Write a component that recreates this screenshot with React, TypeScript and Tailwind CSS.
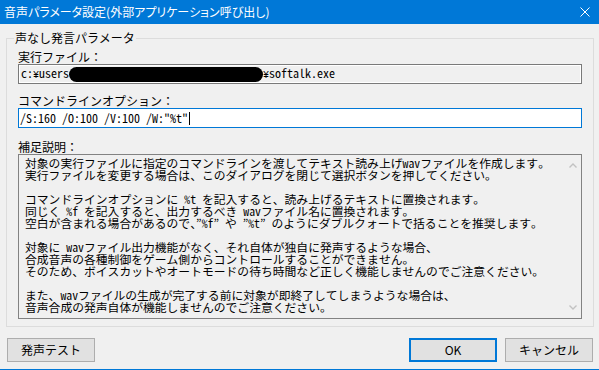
import React from "react";

const ui = "font-['Noto_Sans_CJK_JP',sans-serif]";
const mono = "font-['Noto_Sans_Mono_CJK_JP','Liberation_Mono',monospace]";

const notes: string[] = [
  "対象の実行ファイルに指定のコマンドラインを渡してテキスト読み上げwavファイルを作成します。",
  "実行ファイルを変更する場合は、このダイアログを閉じて選択ボタンを押してください。",
  "",
  "コマンドラインオプションに %t を記入すると、読み上げるテキストに置換されます。",
  "同じく %f を記入すると、出力するべき wavファイル名に置換されます。",
  "空白が含まれる場合があるので、”%f” や ”%t” のようにダブルクォートで括ることを推奨します。",
  "",
  "対象に wavファイル出力機能がなく、それ自体が独自に発声するような場合、",
  "合成音声の各種制御をゲーム側からコントロールすることができません。",
  "そのため、ボイスカットやオートモードの待ち時間など正しく機能しませんのでご注意ください。",
  "",
  "また、wavファイルの生成が完了する前に対象が即終了してしまうような場合は、",
  "音声合成の発声自体が機能しませんのでご注意ください。",
];

// half-width yen sign, 6px wide like MS Gothic
function Yen() {
  return <span className="font-['Liberation_Mono',monospace] text-[10px]">¥</span>;
}

function Button({ label, primary }: { label: string; primary?: boolean }) {
  return (
    <button
      className={`w-[88px] h-[24px] bg-[#e1e1e1] text-[12px] leading-none text-black ${ui} ${
        primary ? "border-2 border-[#0078d7]" : "border border-[#adadad]"
      }`}
    >
      {label}
    </button>
  );
}

export default function App() {
  return (
    <div className="w-[599px] h-[370px] bg-[#f0f0f0] flex flex-col border-b border-[#0078d7] overflow-hidden">
      {/* title bar */}
      <div className="h-[24px] shrink-0 bg-[#0078d7] flex items-center justify-between pl-[4px] pr-[9px]">
        <span className={`text-white text-[12px] leading-none [font-feature-settings:'palt'] ${ui}`}>
          音声パラメータ設定(外部アプリケーション呼び出し)
        </span>
        <svg width="10" height="10" viewBox="0 0 10 10" className="text-white">
          <path d="M0.5 0.5 L9.5 9.5 M9.5 0.5 L0.5 9.5" stroke="currentColor" strokeWidth="1" />
        </svg>
      </div>

      {/* group box */}
      <fieldset className="mt-[8px] mx-[6px] border border-[#dcdcdc] px-[11px] pb-[7px] w-[588px]">
        <legend className={`ml-[-4px] px-[1px] text-[12px] leading-[12px] text-black ${ui}`}>
          声なし発言パラメータ
        </legend>

        <div className={`mt-[6px] text-[12px] leading-[14px] text-black ${ui}`}>実行ファイル：</div>
        <div
          className={`h-[20px] border border-[#7a7a7a] bg-[#f0f0f0] shadow-[inset_0_0_0_1px_#ffffff] flex items-center pl-[2px] text-[12px] leading-none text-black ${mono}`}
        >
          <span>
            c:<Yen />users
          </span>
          <span className="inline-block w-[194px] h-[15px] rounded-full bg-black"></span>
          <span>
            <Yen />softalk.exe
          </span>
        </div>

        <div className={`mt-[10px] text-[12px] leading-[14px] text-black ${ui}`}>
          コマンドラインオプション：
        </div>
        <div
          className={`h-[20px] border border-[#0078d7] bg-white flex items-center pl-[1px] text-[12px] leading-none text-black ${mono}`}
        >
          <span className="whitespace-pre">/S:160 /O:100 /V:100 /W:"%t"</span>
          <span className="inline-block w-[1px] h-[13px] bg-black ml-[1px]"></span>
        </div>

        <div className={`mt-[12px] text-[12px] leading-[14px] text-black ${ui}`}>補足説明：</div>
        <div className="h-[165px] border border-[#828282] bg-[#f0f0f0] flex">
          <div className={`flex-1 pl-[6px] pt-[2px] text-[11.8px] leading-[12px] text-black ${mono}`}>
            {notes.map((line, i) => (
              <div key={i} className="h-[12px] whitespace-pre">
                {line}
              </div>
            ))}
          </div>
          <div className="w-[16px] flex flex-col items-center justify-between py-[8px]">
            <svg width="8" height="5" viewBox="0 0 8 5">
              <path d="M0.5 4.5 L4 1 L7.5 4.5" stroke="#c2c2c2" strokeWidth="1.4" fill="none" />
            </svg>
            <svg width="8" height="5" viewBox="0 0 8 5">
              <path d="M0.5 0.5 L4 4 L7.5 0.5" stroke="#c2c2c2" strokeWidth="1.4" fill="none" />
            </svg>
          </div>
        </div>
      </fieldset>

      {/* buttons */}
      <div className="mt-[11px] flex items-center pl-[7px] pr-[6px]">
        <Button label="発声テスト" />
        <div className="flex-1" />
        <div className="flex gap-[8px]">
          <Button label="OK" primary />
          <Button label="キャンセル" />
        </div>
      </div>
    </div>
  );
}
